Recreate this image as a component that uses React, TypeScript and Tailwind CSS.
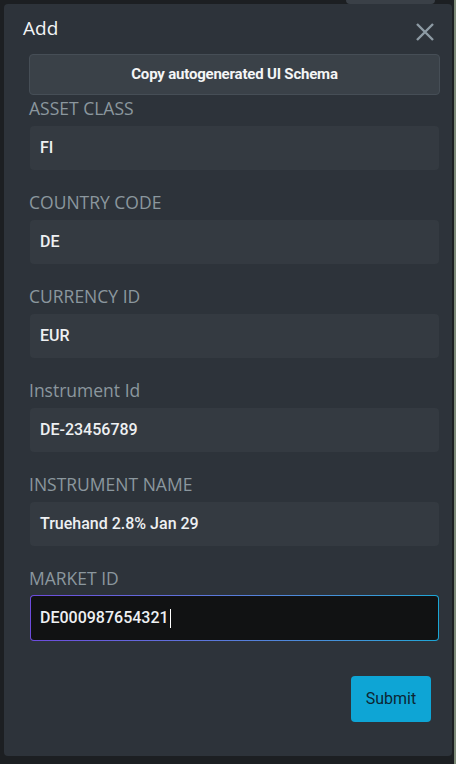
type Field = { label: string; value: string };

const fields: Field[] = [
  { label: "ASSET CLASS", value: "FI" },
  { label: "COUNTRY CODE", value: "DE" },
  { label: "CURRENCY ID", value: "EUR" },
  { label: "Instrument Id", value: "DE-23456789" },
  { label: "INSTRUMENT NAME", value: "Truehand 2.8% Jan 29" },
];

function CloseIcon() {
  return (
    <svg width="18" height="18" viewBox="0 0 18 18" fill="none">
      <path d="M1 1L17 17M17 1L1 17" stroke="#8d9ba4" strokeWidth="2.4" />
    </svg>
  );
}

function FieldGroup({ label, value }: Field) {
  return (
    <div className="flex flex-col">
      <label className="h-[22px] text-[17.5px] leading-[22px] text-[#8b979e] [font-family:'Open_Sans',sans-serif]">
        {label}
      </label>
      <div className="mt-[7px] mx-[1px] flex h-[44px] items-center rounded-[4px] bg-[#343a41] px-[10px] text-[16px] font-medium text-[#eef0f2]">
        {value}
      </div>
    </div>
  );
}

export default function App() {
  return (
    <div className="relative h-[764px] w-[456px] overflow-hidden bg-[#1c1f22] p-[4px] [font-family:Roboto,'Liberation_Sans',sans-serif]">
      {/* page behind the modal */}
      <div className="absolute right-[21px] top-[-8px] h-[12px] w-[89px] rounded-[4px] bg-[#3a4047]" />
      <div className="absolute right-0 top-0 h-full w-[2px] bg-[#7d8a78]" />

      <div className="relative flex h-[752px] w-[448px] flex-col rounded-[4px] bg-[#2d333a] pl-[25px] pr-[12px]">
        <div className="flex h-[50px] items-start justify-between">
          <h2 className="ml-[-6px] mt-[10px] text-[19px] leading-[28px] text-[#f2f4f5] [font-family:'Open_Sans',sans-serif]">
            Add
          </h2>
          <button type="button" className="mr-[6px] mt-[19px]" aria-label="Close">
            <CloseIcon />
          </button>
        </div>

        <button
          type="button"
          className="h-[41px] w-[411px] rounded-[4px] border border-[#464e56] bg-[#3a4148] text-[15px] font-bold tracking-[-0.2px] text-[#f4f5f6]"
        >
          Copy autogenerated UI Schema
        </button>

        <div className="mt-[2px] flex flex-col gap-[21px]">
          {fields.map((f) => (
            <FieldGroup key={f.label} label={f.label} value={f.value} />
          ))}

          <div className="flex flex-col">
            <label className="h-[22px] text-[17.5px] leading-[22px] text-[#8b979e] [font-family:'Open_Sans',sans-serif]">
              MARKET ID
            </label>
            <div className="mt-[6px] mx-[1px] rounded-[4px] bg-gradient-to-r from-[#6d4bdc] to-[#1aa6d6] p-[1px]">
              <div className="flex h-[44px] items-center rounded-[3px] bg-[#111213] px-[9px] text-[16px] font-medium text-[#eef0f2]">
                DE000987654321
                <span className="ml-[1px] h-[19px] w-[1px] bg-white" />
              </div>
            </div>
          </div>
        </div>

        <div className="mt-[35px] flex justify-end pr-[9px]">
          <button
            type="button"
            className="h-[46px] w-[80px] rounded-[4px] bg-[#0ea5d5] text-[16px] text-[#0c2633]"
          >
            Submit
          </button>
        </div>
      </div>
    </div>
  );
}
